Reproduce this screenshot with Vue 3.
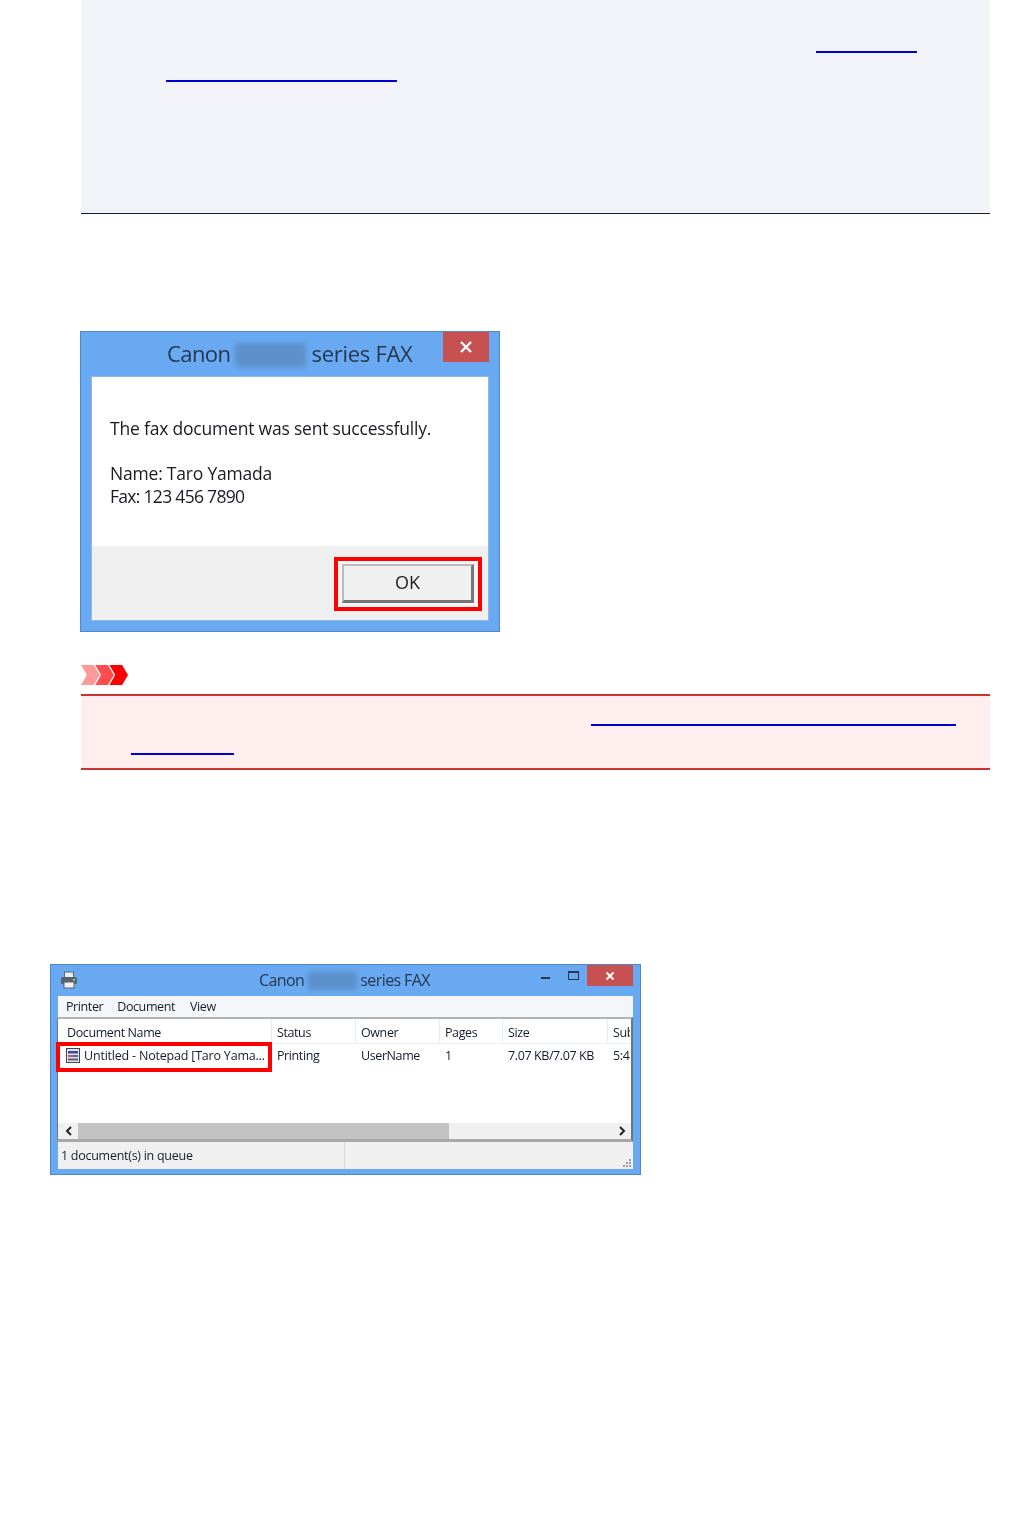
<template>
  <div class="page">
    <section class="note">
      <div class="link-row first"><span class="link note-a"></span></div>
      <div class="link-row second"><span class="link note-b"></span></div>
    </section>

    <div class="dialog">
      <div class="dialog-title">
        <span class="dialog-caption">Canon <i class="smudge"></i> <b>series FAX</b></span>
        <span class="close big"><svg width="14" height="14" viewBox="0 0 14 14"><path d="M2 2l10 10M12 2L2 12" stroke="#fff" stroke-width="2.4" fill="none" /></svg></span>
      </div>
      <div class="dialog-body">
        <div class="dialog-msg">
          <p>The fax document was sent successfully.</p>
          <p class="gap">Name: Taro Yamada</p>
          <p class="fax">Fax: 123 456 7890</p>
        </div>
        <div class="dialog-foot">
          <div class="red-frame"><button class="ok">OK</button></div>
        </div>
      </div>
    </div>

    <svg class="important-icon" width="47" height="20" viewBox="0 0 48 20" preserveAspectRatio="none">
      <path d="M0 0h13l6 10-6 10H0l6-10z" fill="#ff9a9a" />
      <path d="M14.500 0h13l6 10-6 10h-13l6-10z" fill="#ff4d4d" />
      <path d="M29 0h13l6 10-6 10H29l6-10z" fill="#ff0000" />
    </svg>
    <section class="important">
      <div class="link-row imp-first"><span class="link imp-a"></span></div>
      <div class="link-row imp-second"><span class="link imp-b"></span></div>
    </section>

    <div class="queue">
      <div class="queue-title">
        <svg class="printer" width="18" height="18" viewBox="0 0 18 18">
          <rect x="4.500" y="1" width="9" height="6" fill="#e8edf2" stroke="#5d6670" />
          <rect x="1" y="6" width="16" height="7" rx="1.500" fill="#59626b" />
          <rect x="4" y="11" width="10" height="6" fill="#eef2f6" stroke="#59626b" />
          <rect x="13" y="8" width="2" height="1.500" fill="#9fe0c0" />
        </svg>
        <span class="queue-caption">Canon <i class="smudge small"></i> series FAX</span>
        <span class="win-btn min-btn"><i class="min"></i></span>
        <span class="win-btn max-btn"><i class="max"></i></span>
        <span class="close small-x"><svg width="10" height="10" viewBox="0 0 10 10"><path d="M1.500 1.500l7 7M8.500 1.500l-7 7" stroke="#fff" stroke-width="2" fill="none" /></svg></span>
      </div>
      <div class="menu">
        <span>Printer</span><span>Document</span><span>View</span>
      </div>
      <div class="list">
        <div class="list-head">
          <span v-for="col in columns" :key="col.name" :style="{ width: col.width + 'px' }">{{ col.name }}</span>
        </div>
        <div class="list-row">
          <div class="doc-cell">
            <svg width="16" height="17" viewBox="0 0 16 17">
              <rect x="1.500" y="1.500" width="13" height="14" fill="#dfe3ea" stroke="#3d4756" />
              <rect x="3" y="4" width="10" height="2.500" fill="#3a4a9a" />
              <rect x="3" y="8" width="5" height="2" fill="#d84a6a" />
              <rect x="8" y="8" width="5" height="2" fill="#4a6ac0" />
              <rect x="3" y="11.500" width="10" height="2" fill="#5a6270" />
            </svg>
            <span>Untitled - Notepad [Taro Yama...</span>
          </div>
          <span v-for="cell in cells" :key="cell.text" :style="{ width: cell.width + 'px' }">{{ cell.text }}</span>
        </div>
        <div class="list-space"></div>
        <div class="scroll">
          <span class="arrow"><svg width="8" height="10" viewBox="0 0 8 10"><path d="M6 1L2 5l4 4" stroke="#222" stroke-width="2" fill="none" /></svg></span>
          <span class="thumb"></span>
          <span class="track"></span>
          <span class="arrow"><svg width="8" height="10" viewBox="0 0 8 10"><path d="M2 1l4 4-4 4" stroke="#222" stroke-width="2" fill="none" /></svg></span>
        </div>
      </div>
      <div class="status">
        <span class="status-left">1 document(s) in queue</span>
        <span class="status-right">
          <svg width="10" height="10" viewBox="0 0 10 10" fill="#9aa0a6"><rect x="7" y="1" width="2" height="2" /><rect x="4" y="4" width="2" height="2" /><rect x="7" y="4" width="2" height="2" /><rect x="1" y="7" width="2" height="2" /><rect x="4" y="7" width="2" height="2" /><rect x="7" y="7" width="2" height="2" /></svg>
        </span>
      </div>
    </div>
  </div>
</template>

<script setup>
const columns = [
  { name: 'Document Name', width: 214 },
  { name: 'Status', width: 84 },
  { name: 'Owner', width: 84 },
  { name: 'Pages', width: 63 },
  { name: 'Size', width: 105 },
  { name: 'Sub', width: 22 },
]

const cells = [
  { text: 'Printing', width: 84 },
  { text: 'UserName', width: 84 },
  { text: '1', width: 63 },
  { text: '7.07 KB/7.07 KB', width: 105 },
  { text: '5:4', width: 17 },
]
</script>

<style>
html, body {
  background: #fff;
}
</style>

<style scoped>
.page {
  width: 1021px;
  height: 1514px;
  overflow: hidden;
  font-family: "Open Sans", "Liberation Sans", sans-serif;
  color: #1c1c24;
}

.note {
  box-sizing: border-box;
  width: 909px;
  height: 214px;
  margin-left: 81px;
  background: #f2f4fa;
  border-bottom: 1px solid #1a1a3a;
}

.link-row {
  display: flex;
}

.link {
  display: block;
  height: 2px;
  background: #0000cc;
}

.first { padding: 51px 0 0 735px; }
.note-a { width: 101px; }
.second { padding: 27px 0 0 85px; }
.note-b { width: 231px; }

.dialog {
  box-sizing: border-box;
  width: 420px;
  height: 301px;
  margin: 117px 0 0 80px;
  padding: 0 11px 11px;
  background: #69a9f2;
  border: 1px solid #4f86c6;
  display: flex;
  flex-direction: column;
}

.dialog-title {
  height: 45px;
  display: flex;
  align-items: flex-start;
  flex: none;
}

.dialog-caption {
  flex: 1;
  padding: 6px 0 0 75px;
  font-size: 22px;
  line-height: 30px;
  color: #26384f;
  white-space: nowrap;
  filter: blur(0.45px);
  letter-spacing: -0.6px;
}

.dialog-caption b {
  font-weight: 400;
  letter-spacing: -0.3px;
}

.smudge {
  display: inline-block;
  width: 71px;
  height: 24px;
  vertical-align: -5px;
  background: #5c90ca;
  filter: blur(2.5px);
}

.smudge.small {
  width: 49px;
  height: 18px;
  vertical-align: -4px;
}

.close {
  display: flex;
  align-items: center;
  justify-content: center;
  background: #c75050;
  flex: none;
}

.close.big {
  width: 46px;
  height: 30px;
  margin-right: -1px;
}

.dialog-body {
  flex: 1;
  display: flex;
  flex-direction: column;
  background: #fff;
  outline: 1px solid #8fb8e6;
}

.dialog-msg {
  flex: 1;
  padding: 40px 0 0 18px;
  font-size: 17.500px;
  line-height: 23px;
  color: #1a1a22;
  filter: blur(0.45px);
  letter-spacing: -0.2px;
}

.dialog-msg p {
  margin: 0;
}

.dialog-msg .gap {
  margin-top: 22px;
}

.dialog-msg .fax {
  letter-spacing: -0.7px;
}

.dialog-foot {
  height: 74px;
  box-sizing: border-box;
  background: #f0f0f0;
  display: flex;
  justify-content: flex-end;
  padding: 11px 6px 0 0;
}

.red-frame {
  box-sizing: border-box;
  width: 148px;
  height: 54px;
  padding: 3px 4px 4px;
  background: #f6f6f6;
  border: 4px solid #ff0000;
}

.ok {
  display: block;
  box-sizing: border-box;
  width: 132px;
  height: 39px;
  padding: 0 0 3px;
  background: #f0f0f0;
  border: 2px solid #777;
  border-top-color: #bcbcbc;
  border-left-color: #bcbcbc;
  border-right-width: 3px;
  border-bottom-width: 3px;
  font: 18px "Open Sans", sans-serif;
  color: #1c1c24;
  filter: blur(0.3px);
}

.important-icon {
  display: block;
  margin: 33px 0 0 81px;
  filter: blur(0.4px);
}

.important {
  box-sizing: border-box;
  width: 909px;
  height: 76px;
  margin: 9px 0 0 81px;
  background: #feeeee;
  border-top: 2px solid #cc3333;
  border-bottom: 2px solid #cc3333;
}

.imp-first { padding: 28px 0 0 510px; }
.imp-a { width: 365px; }
.imp-second { padding: 27px 0 0 50px; }
.imp-b { width: 103px; }

.queue {
  box-sizing: border-box;
  width: 591px;
  height: 211px;
  margin: 194px 0 0 50px;
  padding: 0 7px 8px;
  background: #69a9f2;
  border: 1px solid #4f86c6;
  display: flex;
  flex-direction: column;
  font-size: 12.500px;
  color: #141c2c;
}

.queue-title {
  height: 31px;
  flex: none;
  display: flex;
  align-items: flex-start;
}

.printer {
  margin: 6px 0 0 2px;
  flex: none;
  filter: blur(0.4px);
}

.queue-caption {
  flex: 1;
  padding: 3px 0 0 181px;
  font-size: 16px;
  line-height: 24px;
  color: #26384f;
  white-space: nowrap;
  filter: blur(0.4px);
  letter-spacing: -0.6px;
}

.win-btn {
  height: 21px;
  flex: none;
  display: flex;
  align-items: center;
  justify-content: center;
}

.min-btn { width: 30px; }
.max-btn { width: 27px; }

.min {
  display: block;
  width: 9px;
  height: 2px;
  margin-top: 5px;
  background: #26384f;
}

.max {
  display: block;
  box-sizing: border-box;
  width: 11px;
  height: 9px;
  border: 1px solid #26384f;
  border-top-width: 2px;
}

.close.small-x {
  width: 46px;
  height: 21px;
}

.menu {
  height: 21px;
  flex: none;
  display: flex;
  gap: 14px;
  align-items: center;
  padding-left: 8px;
  background: #f5f6f9;
  filter: blur(0.4px);
  letter-spacing: -0.4px;
}

.menu span:last-child {
  margin-left: 1px;
}

.list {
  flex: none;
  height: 125px;
  display: flex;
  flex-direction: column;
  background: #fff;
  border-top: 2px solid #b4b4b4;
  border-left: 1px solid #6b7680;
  border-right: 2px solid #6b7680;
  border-bottom: 3px solid #a8a8a8;
  box-sizing: border-box;
  margin-left: -1px;
}

.list-head {
  height: 25px;
  flex: none;
  display: flex;
  border-bottom: 1px solid #e8eff8;
  box-sizing: border-box;
  filter: blur(0.4px);
  letter-spacing: -0.4px;
}

.list-head span {
  flex: none;
  box-sizing: border-box;
  padding-left: 5px;
  line-height: 27px;
  white-space: nowrap;
  overflow: hidden;
  box-shadow: inset -1px 0 #e4edf7;
}

.list-head span:first-child {
  padding-left: 9px;
}

.list-head span:last-child {
  box-shadow: none;
}

.list-row {
  height: 22px;
  flex: none;
  display: flex;
  align-items: center;
  filter: blur(0.4px);
  letter-spacing: -0.4px;
}

.list-row > span {
  flex: none;
  white-space: nowrap;
  overflow: hidden;
}

.doc-cell {
  position: relative;
  width: 219px;
  flex: none;
  display: flex;
  align-items: center;
  gap: 3px;
  padding-left: 7px;
  box-sizing: border-box;
  white-space: nowrap;
  letter-spacing: -0.2px;
}

.doc-cell::after {
  content: "";
  position: absolute;
  left: -2px;
  top: -5px;
  box-sizing: border-box;
  width: 216px;
  height: 30px;
  border: 4px solid #ff0000;
}

.list-space {
  flex: 1;
}

.scroll {
  height: 16px;
  flex: none;
  display: flex;
  align-items: stretch;
  background: #f0f0f0;
}

.arrow {
  width: 20px;
  flex: none;
  display: flex;
  align-items: center;
  justify-content: center;
  padding-left: 1px;
  box-sizing: border-box;
}

.thumb {
  width: 371px;
  flex: none;
  background: #c2c2c2;
}

.track {
  flex: 1;
}

.status {
  flex: 1;
  display: flex;
  background: #f0f0f0;
  filter: blur(0.4px);
  letter-spacing: -0.27px;
}

.status-left {
  width: 287px;
  padding-left: 3px;
  line-height: 27px;
  border-right: 1px solid #d8d8d8;
  box-sizing: border-box;
  flex: none;
  white-space: nowrap;
}

.status-right {
  flex: 1;
  display: flex;
  justify-content: flex-end;
  align-items: flex-end;
  padding: 0 1px 1px 0;
}
</style>
